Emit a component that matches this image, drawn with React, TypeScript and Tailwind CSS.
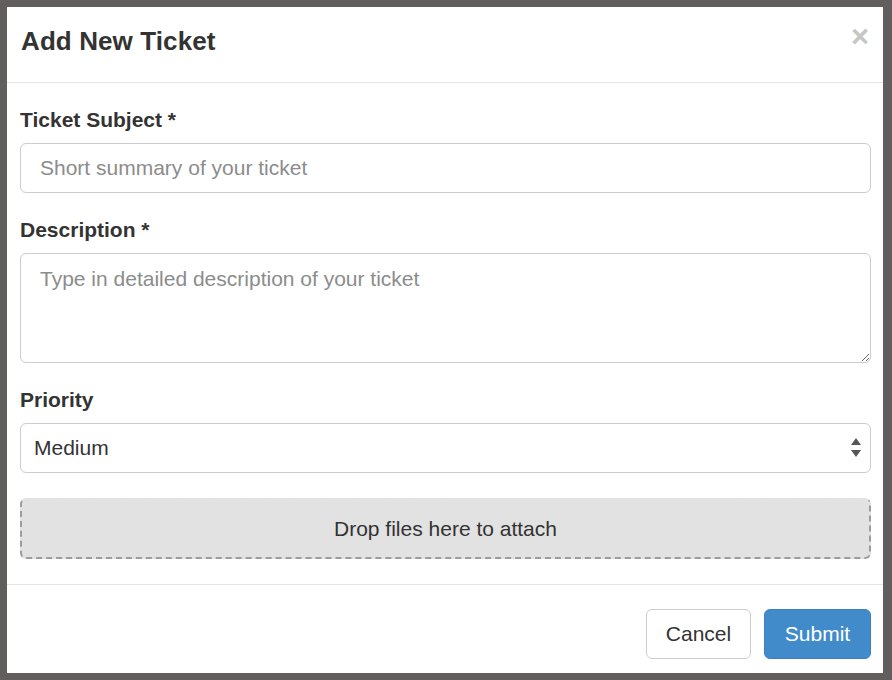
import React from 'react';

const font = { fontFamily: '"Liberation Sans", Arial, sans-serif' };

export default function App() {
  return (
    <div className="w-[892px] h-[680px] bg-[#625e5d] pt-[7px] pl-[7px] pr-[9px] pb-[7px]" style={font}>
      <div className="bg-white h-full flex flex-col text-[#333]">
        {/* header */}
        <div className="h-[76px] border-b border-[#e5e5e5] flex items-center justify-between pl-[14px] pr-[14px] shrink-0">
          <h4 className="text-[26px] font-bold leading-none tracking-[0.1px] text-[#333] -mt-[7px]">Add New Ticket</h4>
          <button className="text-[31px] font-bold leading-none text-[#c6c6c6] relative -top-[8px]">×</button>
        </div>

        {/* body */}
        <div className="pl-[13px] pr-[12px] pt-[22px] pb-[25px]">
          <label className="block h-[30px] mb-[8px] text-[21px] leading-[30px] font-bold">Ticket Subject *</label>
          <input
            type="text"
            placeholder="Short summary of your ticket"
            className="block w-full h-[50px] mb-[22px] px-[19px] border border-[#cccccc] rounded-[6px] text-[21px] text-[#333] placeholder:text-[#8c8c8c] outline-none"
          />

          <label className="block h-[30px] mb-[8px] text-[21px] leading-[30px] font-bold">Description *</label>
          <textarea
            placeholder="Type in detailed description of your ticket"
            className="block w-full h-[110px] mb-[22px] px-[19px] py-[10px] border border-[#cccccc] rounded-[6px] text-[21px] leading-[30px] text-[#333] placeholder:text-[#8c8c8c] outline-none resize-y"
          />

          <label className="block h-[30px] mb-[8px] text-[21px] leading-[30px] font-bold">Priority</label>
          <div className="relative">
            <select
              defaultValue="Medium"
              className="block w-full h-[50px] pl-[13px] pr-[40px] border border-[#cccccc] rounded-[6px] text-[21px] text-[#333] bg-white appearance-none outline-none"
            >
              <option>Low</option>
              <option>Medium</option>
              <option>High</option>
            </select>
            <svg className="absolute right-[10px] top-[15px] pointer-events-none" width="10" height="20" viewBox="0 0 10 20">
              <polygon points="5,0 10,7 0,7" fill="#555" />
              <polygon points="0,12 10,12 5,19" fill="#555" />
            </svg>
          </div>

          <div className="mt-[25px] h-[61px] bg-[#e2e2e2] border-2 border-dashed border-[#9c9c9c] border-t-[#e2e2e2] rounded-[6px] flex items-center justify-center text-[21px] text-[#333]">
            Drop files here to attach
          </div>
        </div>

        {/* footer */}
        <div className="border-t border-[#e5e5e5] pt-[24px] pr-[12px] flex justify-end gap-[13px]">
          <button className="w-[105px] h-[50px] border border-[#cccccc] rounded-[6px] bg-white text-[21px] text-[#333]">
            Cancel
          </button>
          <button className="w-[107px] h-[50px] border border-[#3c80c2] rounded-[6px] bg-[#428bca] text-[21px] text-white">
            Submit
          </button>
        </div>
      </div>
    </div>
  );
}
